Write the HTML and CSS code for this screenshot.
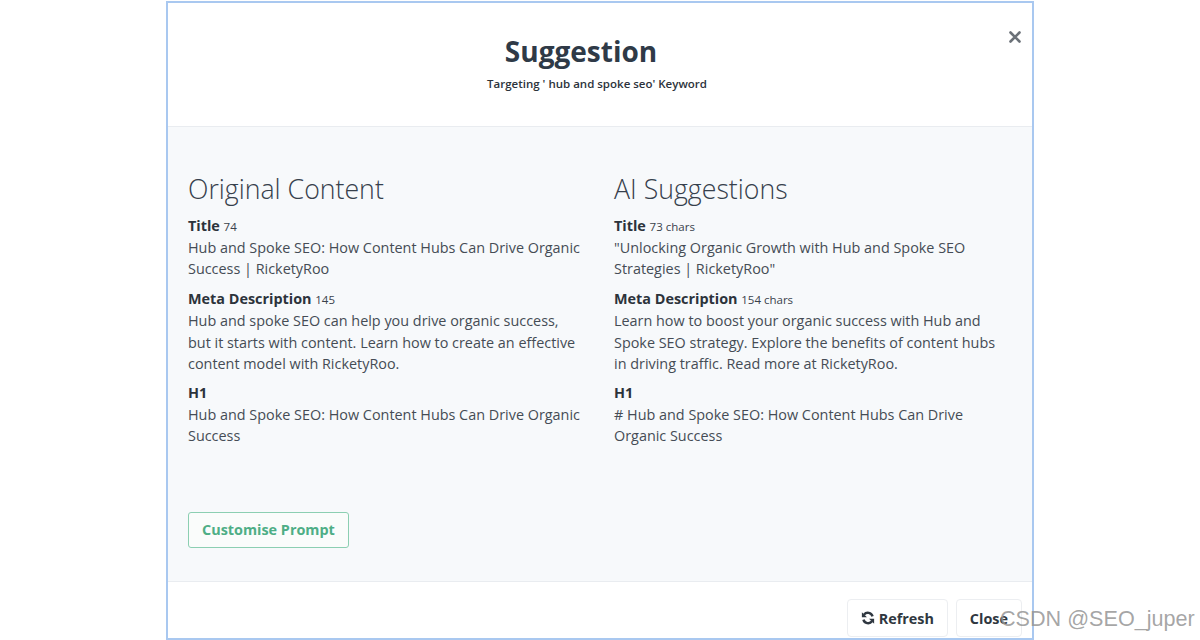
FILE: index.html
```html
<!DOCTYPE html>
<html lang="en">
<head>
    <meta charset="UTF-8">
    <meta name="viewport" content="width=device-width, initial-scale=1.0">
    <title>Suggestion</title>
    <link rel="stylesheet" href="styles.css">
</head>
<body>
    <div class="modal">
        <div class="modal-header">
            <h2 class="modal-title">Suggestion</h2>
            <div class="modal-subtitle">Targeting ' hub and spoke seo' Keyword</div>
            <button class="close-x" aria-label="Close">
                <svg width="12" height="12" viewBox="0 0 12 12">
                    <path d="M1.5 1.5 L10.5 10.5 M10.5 1.5 L1.5 10.5" stroke="#6b7178" stroke-width="2.6" stroke-linecap="round"/>
                </svg>
            </button>
        </div>

        <div class="modal-body">
            <div class="columns">
                <div class="column">
                    <h3 class="column-title">Original Content</h3>
                    <div class="field">
                        <div class="field-label">Title <span class="count">74</span></div>
                        <div class="field-value">Hub and Spoke SEO: How Content Hubs Can Drive Organic Success | RicketyRoo</div>
                    </div>
                    <div class="field">
                        <div class="field-label">Meta Description <span class="count">145</span></div>
                        <div class="field-value">Hub and spoke SEO can help you drive organic success, but it starts with content. Learn how to create an effective content model with RicketyRoo.</div>
                    </div>
                    <div class="field">
                        <div class="field-label">H1</div>
                        <div class="field-value">Hub and Spoke SEO: How Content Hubs Can Drive Organic Success</div>
                    </div>
                </div>
                <div class="column">
                    <h3 class="column-title">AI Suggestions</h3>
                    <div class="field">
                        <div class="field-label">Title <span class="count">73 chars</span></div>
                        <div class="field-value">"Unlocking Organic Growth with Hub and Spoke SEO Strategies | RicketyRoo"</div>
                    </div>
                    <div class="field">
                        <div class="field-label">Meta Description <span class="count">154 chars</span></div>
                        <div class="field-value">Learn how to boost your organic success with Hub and Spoke SEO strategy. Explore the benefits of content hubs in driving traffic. Read more at RicketyRoo.</div>
                    </div>
                    <div class="field">
                        <div class="field-label">H1</div>
                        <div class="field-value"># Hub and Spoke SEO: How Content Hubs Can Drive Organic Success</div>
                    </div>
                </div>
            </div>
            <button class="btn-outline">Customise Prompt</button>
        </div>

        <div class="modal-footer">
            <button class="btn">
                <svg width="14" height="14" viewBox="0 0 16 16">
                    <path d="M13.2 6.2 A5.6 5.6 0 0 0 3.4 4.2" fill="none" stroke="#2f3740" stroke-width="2.8"/>
                    <path d="M1 1.4 L1 7.2 L6.8 7.2 Z" fill="#2f3740"/>
                    <path d="M2.8 9.8 A5.6 5.6 0 0 0 12.6 11.8" fill="none" stroke="#2f3740" stroke-width="2.8"/>
                    <path d="M15 14.6 L15 8.8 L9.2 8.8 Z" fill="#2f3740"/>
                </svg>
                Refresh
            </button>
            <button class="btn">Close</button>
        </div>
    </div>

    <div class="watermark">CSDN @SEO_juper</div>
</body>
</html>
```

FILE: styles.css
```css
body {
    margin: 0;
    background: #ffffff;
    font-family: "Open Sans", "Noto Sans", sans-serif;
    color: #3a424c;
    overflow: hidden;
}

.modal {
    box-sizing: border-box;
    width: 868px;
    height: 639px;
    margin: 1px 0 0 166px;
    border: 2px solid #a9c8f0;
    display: flex;
    flex-direction: column;
    overflow: hidden;
    background: #ffffff;
}

.modal-header {
    position: relative;
    flex: none;
    height: 124px;
    box-sizing: border-box;
    padding-top: 30px;
    border-bottom: 1px solid #e9ecf0;
    text-align: center;
}

.modal-title {
    margin: 0;
    padding-right: 38px;
    font-size: 28px;
    line-height: 36px;
    font-weight: 700;
    color: #2f3a47;
}

.modal-subtitle {
    margin-top: 7px;
    padding-right: 6px;
    font-size: 11.5px;
    line-height: 16px;
    font-weight: 600;
    color: #2c333b;
}

.close-x {
    position: absolute;
    top: 28px;
    right: 11px;
    padding: 0;
    border: 0;
    background: none;
    line-height: 0;
}

.modal-body {
    flex: none;
    height: 455px;
    box-sizing: border-box;
    padding: 44px 20px 0;
    background: #f7f9fb;
    border-bottom: 1px solid #e9ecf0;
}

.columns {
    display: grid;
    grid-template-columns: 394px 394px;
    gap: 32px;
}

.column-title {
    margin: 0 0 8px;
    font-size: 26.7px;
    line-height: 36px;
    font-weight: 300;
    color: #36404c;
}

.field {
    margin-bottom: 8.5px;
    font-size: 14.4px;
    line-height: 21.2px;
}

.field-label {
    font-weight: 700;
    color: #2c333b;
}

.count {
    font-size: 11.5px;
    font-weight: 400;
    color: #3a424c;
}

.field-value {
    color: #454c55;
}

.btn-outline {
    margin-top: 57px;
    height: 36px;
    padding: 0 13px;
    border: 1px solid #8ccfb2;
    border-radius: 3px;
    background: #fafcfb;
    font-family: inherit;
    font-size: 14.4px;
    font-weight: 700;
    color: #4eae86;
}

.modal-footer {
    display: flex;
    justify-content: flex-end;
    gap: 8px;
    padding: 17px 10px 0 0;
}

.btn {
    display: flex;
    align-items: center;
    gap: 4px;
    height: 38px;
    padding: 0 13px;
    border: 1px solid #eceef1;
    border-radius: 4px;
    background: #ffffff;
    font-family: inherit;
    font-size: 14.4px;
    font-weight: 700;
    color: #2f3740;
}

.watermark {
    position: absolute;
    left: 1000px;
    top: 606px;
    font-family: "Liberation Sans", Arial, sans-serif;
    font-size: 21.6px;
    line-height: 26px;
    color: rgba(150, 150, 150, 0.85);
    white-space: nowrap;
}
```
